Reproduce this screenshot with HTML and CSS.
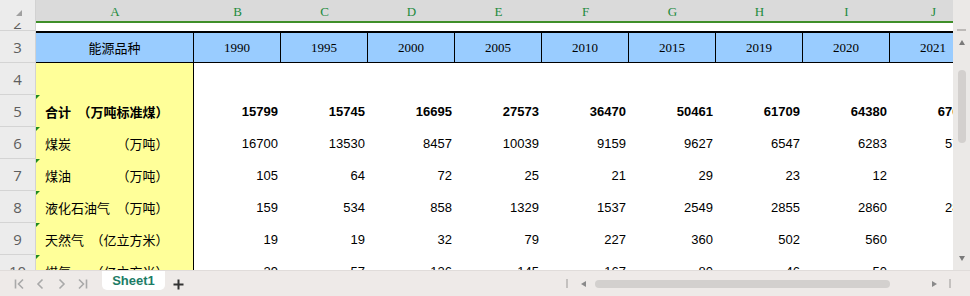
FILE: index.html
```html
<!DOCTYPE html>
<html lang="zh">
<head>
    <meta charset="UTF-8">
    <title>Sheet1</title>
    <link rel="stylesheet" href="styles.css">
</head>
<body>
    <div class="app">
        <div class="main">
            <div class="sheet">
                <div class="colhead">
                    <div class="corner"><span class="corner-tri"></span></div>
                    <div class="ch ch-a">A</div>
                    <div class="ch">B</div>
                    <div class="ch">C</div>
                    <div class="ch">D</div>
                    <div class="ch">E</div>
                    <div class="ch">F</div>
                    <div class="ch">G</div>
                    <div class="ch">H</div>
                    <div class="ch">I</div>
                    <div class="ch">J</div>
                </div>

                <div class="row r2">
                    <div class="rh">2</div>
                </div>

                <div class="row r3">
                    <div class="rh">3</div>
                    <div class="c ca title">能源品种</div>
                    <div class="c yr">1990</div>
                    <div class="c yr">1995</div>
                    <div class="c yr">2000</div>
                    <div class="c yr">2005</div>
                    <div class="c yr">2010</div>
                    <div class="c yr">2015</div>
                    <div class="c yr">2019</div>
                    <div class="c yr">2020</div>
                    <div class="c yr">2021</div>
                </div>

                <div class="row">
                    <div class="rh">4</div>
                    <div class="c ca"></div>
                </div>

                <div class="row bold">
                    <div class="rh">5</div>
                    <div class="c ca err">合计　（万吨标准煤）</div>
                    <div class="c num">15799</div>
                    <div class="c num">15745</div>
                    <div class="c num">16695</div>
                    <div class="c num">27573</div>
                    <div class="c num">36470</div>
                    <div class="c num">50461</div>
                    <div class="c num">61709</div>
                    <div class="c num">64380</div>
                    <div class="c num">67614</div>
                </div>

                <div class="row">
                    <div class="rh">6</div>
                    <div class="c ca err">煤炭　　　　（万吨）</div>
                    <div class="c num">16700</div>
                    <div class="c num">13530</div>
                    <div class="c num">8457</div>
                    <div class="c num">10039</div>
                    <div class="c num">9159</div>
                    <div class="c num">9627</div>
                    <div class="c num">6547</div>
                    <div class="c num">6283</div>
                    <div class="c num">5723</div>
                </div>

                <div class="row">
                    <div class="rh">7</div>
                    <div class="c ca err">煤油　　　　（万吨）</div>
                    <div class="c num">105</div>
                    <div class="c num">64</div>
                    <div class="c num">72</div>
                    <div class="c num">25</div>
                    <div class="c num">21</div>
                    <div class="c num">29</div>
                    <div class="c num">23</div>
                    <div class="c num">12</div>
                    <div class="c num">11</div>
                </div>

                <div class="row">
                    <div class="rh">8</div>
                    <div class="c ca err">液化石油气　（万吨）</div>
                    <div class="c num">159</div>
                    <div class="c num">534</div>
                    <div class="c num">858</div>
                    <div class="c num">1329</div>
                    <div class="c num">1537</div>
                    <div class="c num">2549</div>
                    <div class="c num">2855</div>
                    <div class="c num">2860</div>
                    <div class="c num">2883</div>
                </div>

                <div class="row">
                    <div class="rh">9</div>
                    <div class="c ca err">天然气　（亿立方米）</div>
                    <div class="c num">19</div>
                    <div class="c num">19</div>
                    <div class="c num">32</div>
                    <div class="c num">79</div>
                    <div class="c num">227</div>
                    <div class="c num">360</div>
                    <div class="c num">502</div>
                    <div class="c num">560</div>
                    <div class="c num"></div>
                </div>

                <div class="row">
                    <div class="rh">10</div>
                    <div class="c ca err">煤气　　（亿立方米）</div>
                    <div class="c num">29</div>
                    <div class="c num">57</div>
                    <div class="c num">126</div>
                    <div class="c num">145</div>
                    <div class="c num">167</div>
                    <div class="c num">80</div>
                    <div class="c num">46</div>
                    <div class="c num">50</div>
                    <div class="c num">48</div>
                </div>
            </div>

            <div class="vscroll">
                <span class="vs-dash"></span>
                <span class="tri-up"></span>
                <span class="vs-thumb"></span>
                <span class="tri-down"></span>
            </div>
        </div>

        <div class="tabbar">
            <div class="nav">
                <svg width="21" height="12" viewBox="0 0 21 12"><path d="M6.5 1.5v9M14 1.5L9.5 6l4.5 4.5" fill="none" stroke="#a9a9a9" stroke-width="1.6"/></svg>
                <svg width="21" height="12" viewBox="0 0 21 12"><path d="M12.5 1.5L8 6l4.5 4.5" fill="none" stroke="#a9a9a9" stroke-width="1.6"/></svg>
                <svg width="21" height="12" viewBox="0 0 21 12"><path d="M8.5 1.5L13 6l-4.5 4.5" fill="none" stroke="#a9a9a9" stroke-width="1.6"/></svg>
                <svg width="21" height="12" viewBox="0 0 21 12"><path d="M7 1.5L11.5 6 7 10.5M14.5 1.5v9" fill="none" stroke="#a9a9a9" stroke-width="1.6"/></svg>
            </div>
            <div class="tab">Sheet1</div>
            <svg class="plus" width="11" height="11" viewBox="0 0 11 11"><path d="M5.5 0.5v10M0.5 5.5h10" stroke="#333" stroke-width="2"/></svg>

            <div class="hscroll">
                <span class="hs-bar"></span>
                <span class="tri-left"></span>
                <span class="hs-thumb"></span>
                <span class="tri-right"></span>
                <span class="hs-bar hs-end"></span>
            </div>
        </div>
    </div>
</body>
</html>
```

FILE: styles.css
```css
body {
    margin: 0;
    padding: 0;
    background-color: #fff;
    font-family: "Liberation Sans", Arial, sans-serif;
}
.app {
    width: 970px;
    height: 296px;
    display: flex;
    flex-direction: column;
    overflow: hidden;
}
.main {
    display: flex;
    height: 270px;
}
.sheet {
    width: 953px;
    overflow: hidden;
}

/* column header */
.colhead {
    display: flex;
    height: 23px;
}
.corner {
    flex-shrink: 0;
    width: 36px;
    height: 23px;
    box-sizing: border-box;
    background-color: #ececec;
    border-right: 1px solid #d2d2d2;
    position: relative;
}
.corner-tri {
    position: absolute;
    left: 16px;
    top: 10px;
    width: 0;
    height: 0;
    border-bottom: 6px solid #a0a0a0;
    border-left: 6px solid transparent;
}
.ch {
    flex-shrink: 0;
    width: 87px;
    height: 23px;
    box-sizing: border-box;
    background-color: #dadada;
    border-bottom: 2px solid #3f8f2a;
    font-family: "Liberation Serif", serif;
    font-size: 13px;
    color: #218a3c;
    display: flex;
    align-items: center;
    justify-content: center;
    padding-top: 2px;
}
.ch-a {
    width: 158px;
}

/* rows */
.row {
    display: flex;
    height: 32px;
}
.r2 {
    height: 8px;
}
.rh {
    flex-shrink: 0;
    width: 36px;
    box-sizing: border-box;
    background-color: #ececec;
    border-right: 1px solid #d2d2d2;
    border-bottom: 1px solid #d4d4d4;
    font-family: "Open Sans", sans-serif;
    font-size: 15px;
    color: #5e5e5e;
    display: flex;
    align-items: center;
    justify-content: center;
    overflow: hidden;
}
.r2 .rh {
    align-items: flex-end;
    line-height: 14px;
}
.c {
    flex-shrink: 0;
    width: 87px;
    box-sizing: border-box;
    display: flex;
    align-items: center;
    white-space: pre;
    position: relative;
}
.ca {
    width: 158px;
    background-color: #ffff99;
    border-right: 1px solid #000;
    padding-left: 9px;
    font-family: "Noto Sans CJK SC", sans-serif;
    font-size: 13px;
    color: #000;
}
.ca.err::before {
    content: "";
    position: absolute;
    left: 0;
    top: 0;
    width: 0;
    height: 0;
    border-top: 4px solid #1f8a1f;
    border-right: 4px solid transparent;
}
.num {
    justify-content: flex-end;
    padding-right: 3px;
    font-size: 13px;
    color: #000;
}
.bold .c {
    font-weight: bold;
}

/* title row */
.r3 .c {
    background-color: #99ccff;
    border-top: 2px solid #000;
    border-bottom: 1px solid #000;
    border-right: 1px solid #000;
    justify-content: center;
}
.r3 .title {
    padding-left: 0;
}
.yr {
    font-family: "Liberation Serif", serif;
    font-size: 13px;
    color: #000;
}

/* vertical scroll */
.vscroll {
    width: 17px;
    background-color: #ebe9e7;
    display: flex;
    flex-direction: column;
    align-items: center;
    padding-top: 29px;
    box-sizing: border-box;
}
.vs-dash {
    width: 9px;
    height: 2px;
    background-color: #bdbab8;
}
.tri-up {
    margin-top: 9px;
    width: 0;
    height: 0;
    border-bottom: 5px solid #7a7a7a;
    border-left: 3.5px solid transparent;
    border-right: 3.5px solid transparent;
}
.vs-thumb {
    margin-top: 25px;
    width: 8px;
    height: 73px;
    border-radius: 4px;
    background-color: #d3d0ce;
}
.tri-down {
    margin-top: 113px;
    width: 0;
    height: 0;
    border-top: 5px solid #7a7a7a;
    border-left: 3.5px solid transparent;
    border-right: 3.5px solid transparent;
}

/* sheet tabs */
.tabbar {
    height: 26px;
    box-sizing: border-box;
    background-color: #eeeae8;
    border-top: 1px solid #e0dcda;
    display: flex;
    align-items: flex-start;
}
.nav {
    display: flex;
    align-items: center;
    height: 25px;
    padding-left: 9px;
}
.nav svg {
    display: block;
}
.tab {
    margin-left: 9px;
    width: 63px;
    height: 19px;
    background-color: #fff;
    border-radius: 0 0 5px 5px;
    font-size: 13px;
    font-weight: bold;
    color: #1c7c66;
    display: flex;
    align-items: center;
    justify-content: center;
}
.plus {
    margin-left: 8px;
    margin-top: 8px;
}
.hscroll {
    margin-left: auto;
    margin-right: 19px;
    height: 25px;
    display: flex;
    align-items: center;
}
.hs-bar {
    width: 2px;
    height: 9px;
    background-color: #c4c1bf;
}
.tri-left {
    margin-left: 13px;
    width: 0;
    height: 0;
    border-right: 5px solid #8a8a8a;
    border-top: 3.5px solid transparent;
    border-bottom: 3.5px solid transparent;
}
.hs-thumb {
    margin-left: 9px;
    width: 295px;
    height: 8px;
    border-radius: 4px;
    background-color: #d3d0ce;
}
.tri-right {
    margin-left: 42px;
    width: 0;
    height: 0;
    border-left: 5px solid #8a8a8a;
    border-top: 3.5px solid transparent;
    border-bottom: 3.5px solid transparent;
}
.hs-end {
    margin-left: 12px;
}
```
